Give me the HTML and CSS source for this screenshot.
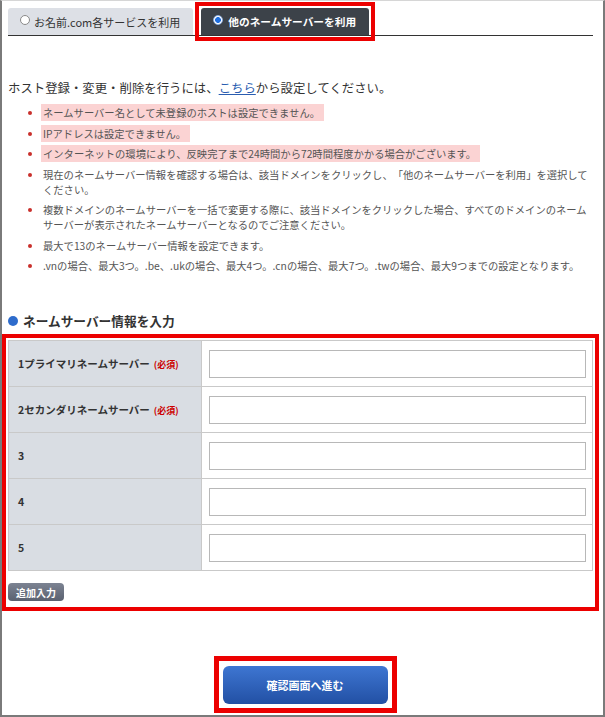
FILE: index.html
```html
<!DOCTYPE html>
<html lang="ja">
<head>
  <meta charset="UTF-8" />
  <meta name="viewport" content="width=device-width, initial-scale=1" />
  <title>ネームサーバー設定</title>
  <link rel="stylesheet" href="styles.css">
</head>
<body>

  <div class="frame">

    <div class="tabs">
      <div class="tab">
        <span class="radio"></span>お名前.com各サービスを利用
      </div>
      <div class="tab-mark">
        <div class="tab tab-active">
          <span class="radio radio-on"></span>他のネームサーバーを利用
        </div>
      </div>
    </div>

    <p class="lead">ホスト登録・変更・削除を行うには、<a href="#">こちら</a>から設定してください。</p>

    <ul class="notes">
      <li><span class="hl">ネームサーバー名として未登録のホストは設定できません。</span></li>
      <li><span class="hl">IPアドレスは設定できません。</span></li>
      <li><span class="hl">インターネットの環境により、反映完了まで24時間から72時間程度かかる場合がございます。</span></li>
      <li>現在のネームサーバー情報を確認する場合は、該当ドメインをクリックし、「他のネームサーバーを利用」を選択してください。</li>
      <li>複数ドメインのネームサーバーを一括で変更する際に、該当ドメインをクリックした場合、すべてのドメインのネームサーバーが表示されたネームサーバーとなるのでご注意ください。</li>
      <li>最大で13のネームサーバー情報を設定できます。</li>
      <li>.vnの場合、最大3つ。.be、.ukの場合、最大4つ。.cnの場合、最大7つ。.twの場合、最大9つまでの設定となります。</li>
    </ul>

    <h3 class="sec-title"><span class="dot"></span>ネームサーバー情報を入力</h3>

    <div class="ns-box">
      <table class="ns-table">
        <tr>
          <th>1プライマリネームサーバー<span class="req">(必須)</span></th>
          <td><input type="text"></td>
        </tr>
        <tr>
          <th>2セカンダリネームサーバー<span class="req">(必須)</span></th>
          <td><input type="text"></td>
        </tr>
        <tr>
          <th>3</th>
          <td><input type="text"></td>
        </tr>
        <tr>
          <th>4</th>
          <td><input type="text"></td>
        </tr>
        <tr>
          <th>5</th>
          <td><input type="text"></td>
        </tr>
      </table>
      <button class="btn-add">追加入力</button>
    </div>

    <div class="submit-row">
      <div class="submit-mark">
        <button class="btn-submit">確認画面へ進む</button>
      </div>
    </div>

  </div>

</body>
</html>
```

FILE: styles.css
```css
* {
  box-sizing: border-box;
}
body {
  margin: 0;
  font-family: "Noto Sans CJK JP", "Noto Sans", sans-serif;
  color: #333;
  background: #fff;
  text-spacing-trim: space-all;
}
.frame {
  width: 605px;
  height: 717px;
  border: 2px solid #7a7a7a;
  border-top: 1px solid #d6d6d6;
  padding: 7px 10px 0 6px;
}

/* tabs */
.tabs {
  display: flex;
  gap: 8px;
  height: 28px;
  border-bottom: 1px solid #333;
}
.tab {
  display: flex;
  align-items: center;
  gap: 4px;
  height: 27px;
  padding: 0 13px 0 12px;
  font-size: 11px;
  background: #dde0e6;
  border-radius: 3px 3px 0 0;
}
.tab-mark {
  outline: 4px solid #ec0000;
  outline-offset: 2px;
}
.tab-active {
  gap: 5px;
  background: #3c4249;
  color: #fff;
  font-weight: bold;
  font-size: 10.7px;
}
.radio {
  width: 10px;
  height: 10px;
  border-radius: 50%;
  border: 1px solid #8a8a8a;
  background: #fff;
  margin-top: -3px;
}
.radio-on {
  border-color: #8fb0e0;
  background: radial-gradient(circle, #1f6fe0 0 2.6px, #fff 3.2px);
}

/* notes */
.lead {
  margin: 43px 0 0;
  font-size: 12.4px;
  line-height: 18px;
}
.lead a {
  color: #2a5db0;
}
.notes {
  margin: 8px 0 0;
  padding-left: 35px;
  font-size: 10.3px;
  line-height: 15px;
  color: #555;
}
.notes li {
  margin-bottom: 5.5px;
}
.notes li:last-child {
  margin-bottom: 0;
}
.notes li::marker {
  color: #c9302c;
}
.hl {
  background: #fbd3d3;
  padding: 1px 4px 1px 2px;
  margin-left: -2px;
}

/* section */
.sec-title {
  display: flex;
  align-items: center;
  gap: 5px;
  margin: 39px 0 0;
  font-size: 12.7px;
  line-height: 18px;
}
.dot {
  width: 10px;
  height: 10px;
  border-radius: 50%;
  background: #2e6ccc;
}
.ns-box {
  margin-top: 10px;
  padding-bottom: 4px;
  outline: 4px solid #ec0000;
  outline-offset: 2px;
}
.ns-table {
  width: 100%;
  border-collapse: collapse;
}
.ns-table th,
.ns-table td {
  height: 46px;
  border: 1px solid #c9c9c9;
}
.ns-table th {
  width: 193px;
  padding: 0 9px;
  text-align: left;
  background: #d9dde3;
  font-size: 10.5px;
  font-weight: bold;
  color: #333;
}
.ns-table td {
  padding: 0 6px 0 7px;
}
.ns-table input {
  display: block;
  width: 100%;
  height: 28px;
  border: 1px solid #b8b8b8;
}
.req {
  margin-left: 4px;
  font-size: 9px;
  color: #c00;
}
.btn-add {
  display: block;
  margin-top: 12px;
  width: 56px;
  height: 18px;
  padding: 0;
  border: none;
  border-radius: 4px;
  background: linear-gradient(#7c8392, #5a6170);
  color: #fff;
  font-family: inherit;
  font-size: 10px;
  font-weight: bold;
}

/* submit */
.submit-row {
  display: flex;
  justify-content: center;
  padding-left: 9px;
  margin-top: 51px;
}
.submit-mark {
  border: 5px solid #ec0000;
  padding: 5px 4px 4px;
}
.btn-submit {
  display: block;
  width: 165px;
  height: 38px;
  border: none;
  border-radius: 6px;
  background: linear-gradient(#3e76d2, #2250a4);
  color: #fff;
  font-family: inherit;
  font-size: 11px;
  font-weight: bold;
}
```
